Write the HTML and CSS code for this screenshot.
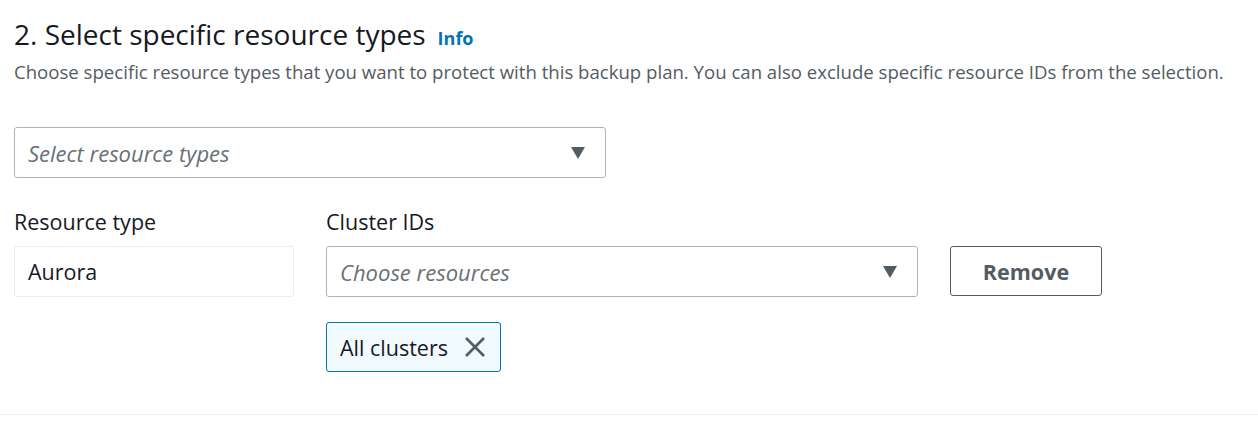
FILE: index.html
```html
<!DOCTYPE html>
<html lang="en">
<head>
    <meta charset="UTF-8">
    <title>Select specific resource types</title>
    <link rel="stylesheet" href="styles.css">
</head>
<body>
    <section class="panel">
        <h2 class="panel-title">2. Select specific resource types <a class="info-link" href="#">Info</a></h2>
        <p class="panel-desc">Choose specific resource types that you want to protect with this backup plan. You can also exclude specific resource IDs from the selection.</p>

        <div class="select select-wide">
            <span class="placeholder">Select resource types</span>
            <span class="caret"></span>
        </div>

        <div class="row">
            <div class="field field-type">
                <label class="field-label">Resource type</label>
                <div class="static-box">Aurora</div>
            </div>
            <div class="field field-ids">
                <label class="field-label">Cluster IDs</label>
                <div class="select">
                    <span class="placeholder">Choose resources</span>
                    <span class="caret"></span>
                </div>
                <div class="token">
                    <span>All clusters</span>
                    <svg class="token-x" width="22" height="22" viewBox="0 0 22 22">
                        <path d="M2 2 L20 20 M20 2 L2 20" stroke="#545b64" stroke-width="2.6" fill="none"/>
                    </svg>
                </div>
            </div>
            <button class="btn-remove">Remove</button>
        </div>
    </section>
</body>
</html>
```

FILE: styles.css
```css
body {
    margin: 0;
    background: #ffffff;
    font-family: "Open Sans", "Noto Sans", sans-serif;
    color: #16191f;
}

.panel {
    padding: 14px 14px 0 14px;
    border-bottom: 1px solid #eaeded;
    height: 400px;
}

.panel-title {
    margin: 0;
    font-size: 28px;
    font-weight: 400;
    line-height: 40px;
    display: flex;
    align-items: baseline;
    gap: 12px;
}

.info-link {
    font-size: 18px;
    font-weight: 700;
    color: #0073bb;
    text-decoration: none;
}

.panel-desc {
    margin: 1px 0 0;
    font-size: 18.6px;
    line-height: 26px;
    color: #545b64;
}

.select {
    height: 51px;
    border: 1px solid #aab7b8;
    border-radius: 3px;
    display: flex;
    align-items: center;
    justify-content: space-between;
    padding: 0 20px 0 13px;
    box-sizing: border-box;
}

.select-wide {
    width: 592px;
    margin-top: 42px;
}

.placeholder {
    font-size: 22px;
    font-style: italic;
    color: #687078;
}

.caret {
    width: 0;
    height: 0;
    border-left: 7px solid transparent;
    border-right: 7px solid transparent;
    border-top: 12px solid #545b64;
}

.row {
    display: flex;
    align-items: flex-start;
    margin-top: 29px;
}

.field-label {
    display: block;
    font-size: 21.5px;
    line-height: 30px;
    margin-bottom: 9px;
}

.field-type {
    width: 280px;
    margin-right: 32px;
}

.static-box {
    height: 51px;
    border: 1px solid #eaeded;
    border-radius: 3px;
    box-sizing: border-box;
    padding: 0 13px;
    display: flex;
    align-items: center;
    font-size: 21.5px;
}

.field-ids {
    width: 592px;
    margin-right: 32px;
}

.token {
    display: inline-flex;
    align-items: center;
    gap: 16px;
    margin-top: 25px;
    height: 50px;
    box-sizing: border-box;
    padding: 0 14px 0 13px;
    background: #f1faff;
    border: 1px solid #0073bb;
    border-radius: 3px;
    font-size: 21.5px;
}

.btn-remove {
    margin-top: 39px;
    width: 152px;
    height: 50px;
    background: #ffffff;
    border: 1px solid #545b64;
    border-radius: 3px;
    font-family: inherit;
    font-size: 21.5px;
    font-weight: 700;
    color: #545b64;
}
```
